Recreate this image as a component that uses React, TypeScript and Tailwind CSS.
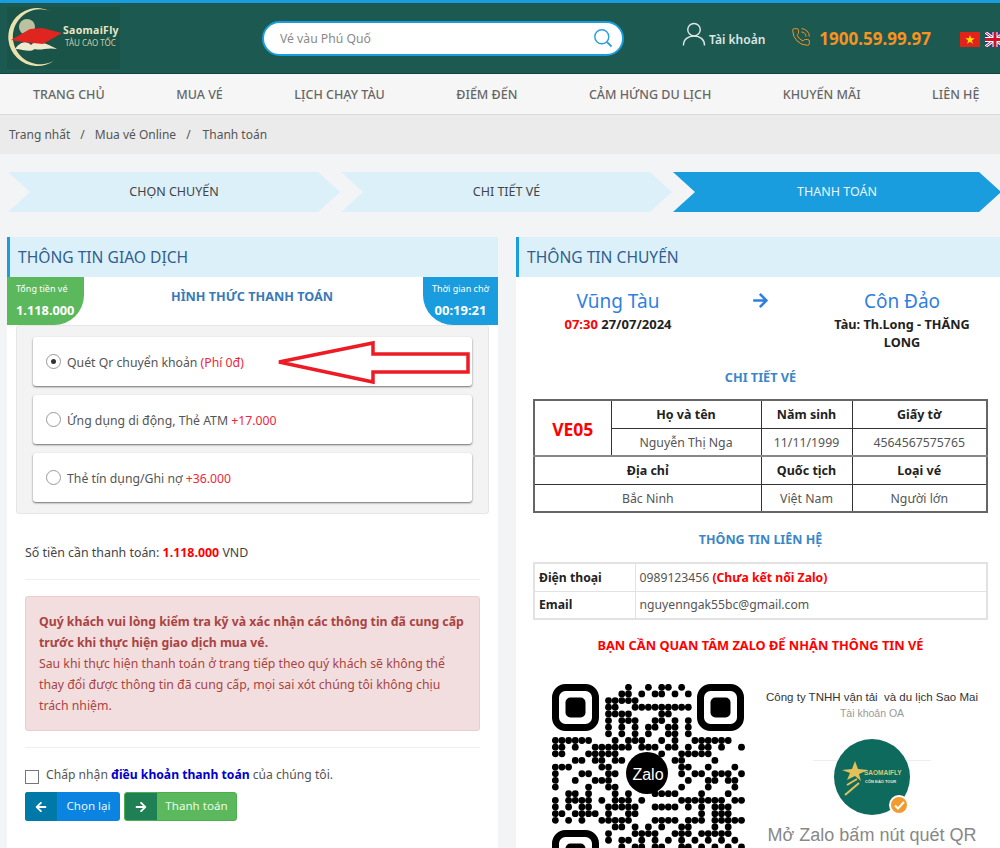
import React from "react";
import { FaArrowLeft, FaArrowRight } from "react-icons/fa";
import { PhoneCall } from "lucide-react";

const NAV = ["TRANG CHỦ", "MUA VÉ", "LỊCH CHẠY TÀU", "ĐIỂM ĐẾN", "CẢM HỨNG DU LỊCH", "KHUYẾN MÃI", "LIÊN HỆ"];

const QR_ROWS: number[][] = [
  [11, 14, 16, 17, 19],
  [10, 11, 13, 15, 16, 18, 20],
  [8, 9, 10, 11, 12],
  [8, 9, 12, 13, 14, 15, 16, 17, 18, 19, 20],
  [8, 9, 10, 11, 16, 17],
  [8, 10, 11, 12, 15, 16, 18, 20],
  [8, 10, 12, 14, 15, 17, 18, 20],
  [8, 10, 12, 14, 17, 18, 20],
  [0, 1, 2, 3, 4, 5, 9, 11, 12, 13, 16, 18, 21, 22, 23, 24, 25, 26],
  [0, 1, 3, 6, 7, 8, 9, 10, 11, 13, 14, 15, 17, 18, 20, 22, 23, 25, 28],
  [0, 1, 5, 6, 7, 8, 9, 16, 19, 20, 21, 22, 23],
  [3, 4, 6, 7, 9, 10, 18, 19, 24],
  [0, 1, 2, 7, 8, 19, 20, 23, 27],
  [0, 4, 5, 8, 9, 19, 21, 22, 24, 25, 26, 28],
  [0, 3, 6, 7, 8, 20, 23, 24, 26, 27],
  [0, 5, 8, 9, 19, 23, 27],
  [2, 3, 5, 9, 11, 15, 16, 17, 18, 22, 26],
  [0, 2, 3, 4, 5, 7, 9, 10, 11, 13, 19, 20, 21, 22, 23, 24, 25, 27, 28],
  [0, 2, 4, 5, 8, 9, 10, 11, 12, 15, 16, 17, 18, 20, 22, 24, 25, 26],
  [0, 1, 3, 4, 5, 6, 8, 11, 12, 22, 24, 25, 26],
  [0, 2, 4, 7, 8, 9, 10, 11, 15, 16, 17, 18, 20, 21, 22, 24, 25, 26, 27, 28],
  [9, 10, 12, 14, 16, 19, 20, 24, 26],
  [8, 12, 13, 14, 15, 18, 19, 20, 22, 23, 24, 25, 26],
  [8, 10, 11, 13, 15, 17, 19, 21, 23, 25, 27],
  [10, 12, 13, 15, 16, 19, 20, 22, 24, 26, 28],
];

function Finder({ x, y }: { x: number; y: number }) {
  return (
    <g>
      <rect x={x + 3.5} y={y + 3.5} width={40} height={40} rx={10} fill="none" stroke="#000" strokeWidth={7} />
      <rect x={x + 13.5} y={y + 13.5} width={20} height={20} rx={5} fill="#000" />
    </g>
  );
}

function QrCode() {
  const p = 6.65;
  return (
    <div className="relative h-[170px] w-[196px] shrink-0 overflow-hidden">
      <svg width="196" height="170" viewBox="0 0 196 170" className="absolute left-0 top-0">
        <Finder x={0} y={0} />
        <Finder x={145} y={0} />
        <Finder x={0} y={146} />
        {QR_ROWS.map((cols, r) =>
          cols.map((c) => <circle key={r + "-" + c} cx={c * p + 3.3} cy={r * p + 3.3} r={3.4} fill="#000" />)
        )}
        <circle cx={95} cy={89} r={21} fill="#000" />
      </svg>
      <span className="absolute left-[76px] top-[79px] w-[40px] text-center text-[16px] leading-[24px] text-white [font-family:'Liberation_Sans',sans-serif]">Zalo</span>
    </div>
  );
}

function Logo() {
  return (
    <div className="relative h-[62px] w-[113px] shrink-0 bg-[#1a5348]">
      <svg width="113" height="62" viewBox="0 0 113 62" className="absolute left-0 top-0">
        <path d="M43 4 A29 29 0 1 0 48 53 A27.5 27.5 0 1 1 43 4 Z" fill="#e9e1ae" />
        <circle cx="20" cy="20" r="8" fill="#f1e7bf" opacity="0.75" />
        <path d="M8 42 C14 34 20 34 24 38 C30 32 38 36 50 42 C40 40 34 44 28 42 C22 46 16 42 8 42 Z" fill="#efe9cf" />
        <path d="M4 33 L23 22 L35 21 L55 26 L36 37 L16 35 Z" fill="#e02420" />
      </svg>
      <span className="absolute left-[56px] top-[17px] whitespace-nowrap text-[10.5px] font-bold leading-[13px] tracking-[0.3px] text-[#e8e6c4]">SaomaiFly</span>
      <span className="absolute left-[58px] top-[31px] whitespace-nowrap text-[8px] leading-[10px] text-[#cfcfa8]">TÀU CAO TỐC</span>
    </div>
  );
}

function VnFlag() {
  return (
    <svg width="20" height="15" viewBox="0 0 20 15" className="shrink-0">
      <rect width="20" height="15" fill="#e2231a" />
      <polygon points="10,3 11.2,6.3 14.6,6.3 11.9,8.4 12.9,11.8 10,9.8 7.1,11.8 8.1,8.4 5.4,6.3 8.8,6.3" fill="#ffde00" />
    </svg>
  );
}

function UkFlag() {
  return (
    <svg width="20" height="15" viewBox="0 0 20 15" className="shrink-0">
      <rect width="20" height="15" fill="#2b3f87" />
      <path d="M0 0 L20 15 M20 0 L0 15" stroke="#fff" strokeWidth="3" />
      <path d="M0 0 L20 15 M20 0 L0 15" stroke="#d0112b" strokeWidth="1" />
      <path d="M10 0 V15 M0 7.5 H20" stroke="#fff" strokeWidth="5" />
      <path d="M10 0 V15 M0 7.5 H20" stroke="#d0112b" strokeWidth="3" />
    </svg>
  );
}

function Header() {
  return (
    <header className="flex h-[74px] items-center border-t-[3px] border-b border-t-[#1a9ddf] border-b-[#12433c] bg-[#1c5951]">
      <div className="ml-[7px] shrink-0"><Logo /></div>
      <div className="ml-[142px] flex h-[35px] w-[362px] shrink-0 items-center justify-between rounded-full border-2 border-[#1a9ddf] bg-white pl-[16px] pr-[9px]">
        <span className="pt-[2px] text-[12.2px] text-[#8a8a8a]">Vé vàu Phú Quố</span>
        <svg width="20" height="20" viewBox="0 0 20 20" fill="none" stroke="#2a9fdf" strokeWidth="1.4">
          <circle cx="8.8" cy="8.8" r="7" />
          <path d="M14 14 L18.5 18.5" strokeWidth="1.8" />
        </svg>
      </div>
      <div className="mb-[8px] ml-[58px] flex h-[24px] shrink-0 items-start">
        <svg width="24" height="24" viewBox="0 0 24 25" fill="none" stroke="#dfe6e4" strokeWidth="1.5">
          <circle cx="12" cy="8" r="6.5" />
          <path d="M1 24.5 C1 18 6 14.5 12 14.5 C18 14.5 23 18 23 24.5" />
        </svg>
        <span className="ml-[3px] whitespace-nowrap pt-[8px] text-[12px] font-semibold leading-[20px] text-[#dfe6e4]">Tài khoản</span>
      </div>
      <div className="ml-[26px] flex shrink-0 items-center">
        <PhoneCall size={20} strokeWidth={1.2} color="#f7931e" className="mb-[3px]" />
        <span className="ml-[8px] mt-[2px] whitespace-nowrap text-[17px] font-bold text-[#f7931e]">1900.59.99.97</span>
      </div>
      <div className="ml-[29px] mt-[3px] flex shrink-0 items-center gap-[5px]">
        <VnFlag />
        <UkFlag />
      </div>
    </header>
  );
}

function Nav() {
  return (
    <nav className="flex h-[41px] items-center gap-[71.5px] border-b border-[#d9d9d9] bg-[#f6f6f6] pl-[33px] pt-[2px]">
      {NAV.map((n) => (
        <span key={n} className="whitespace-nowrap text-[12.5px] font-medium text-[#666]">{n}</span>
      ))}
    </nav>
  );
}

function Breadcrumb() {
  return (
    <div className="flex h-[39px] items-center gap-[10px] bg-[#ebebeb] pl-[9px] text-[12px] text-[#555]">
      <span>Trang nhất</span>
      <span>/</span>
      <span>Mua vé Online</span>
      <span>/</span>
      <span className="ml-[2px]">Thanh toán</span>
    </div>
  );
}

function Steps() {
  return (
    <div className="flex gap-[1px] pl-[8px] pt-[18px]">
      <div className="flex h-[40px] w-[332px] shrink-0 items-center justify-center bg-[#dcf0fa] text-[12.5px] text-[#444] [clip-path:polygon(0_0,calc(100%-22px)_0,100%_50%,calc(100%-22px)_100%,0_100%,22px_50%)]">CHỌN CHUYẾN</div>
      <div className="flex h-[40px] w-[331px] shrink-0 items-center justify-center bg-[#dcf0fa] text-[12.5px] text-[#444] [clip-path:polygon(0_0,calc(100%-22px)_0,100%_50%,calc(100%-22px)_100%,0_100%,22px_50%)]">CHI TIẾT VÉ</div>
      <div className="flex h-[40px] w-[328px] shrink-0 items-center justify-center bg-[#1a9ddf] text-[12.5px] text-[#eaf6fc] [clip-path:polygon(0_0,calc(100%-22px)_0,100%_50%,calc(100%-22px)_100%,0_100%,22px_50%)]">THANH TOÁN</div>
    </div>
  );
}

function PanelTitle({ children }: { children: React.ReactNode }) {
  return (
    <div className="flex h-[40px] items-center border-l-[3px] border-[#1a9ddf] bg-[#dcf0fa] pl-[8px] pt-[2px] text-[15.6px] text-[#2f5f8f]">{children}</div>
  );
}

function Radio({ checked }: { checked?: boolean }) {
  return (
    <span className="flex h-[15px] w-[15px] shrink-0 items-center justify-center rounded-full border border-[#999] bg-white">
      {checked && <span className="h-[5px] w-[5px] rounded-full bg-[#333]" />}
    </span>
  );
}

function PayOption({ checked, children, arrow }: { checked?: boolean; children: React.ReactNode; arrow?: boolean }) {
  return (
    <div className="relative flex h-[49px] items-center gap-[6px] rounded-[3px] bg-white pl-[13px] text-[12.25px] text-[#555] shadow-[0_1px_2px_rgba(0,0,0,0.55)]">
      <Radio checked={checked} />
      <span className="pt-[4px]">{children}</span>
      {arrow && (
        <svg width="200" height="46" viewBox="0 0 200 46" fill="none" className="absolute left-[243px] top-[2px]">
          <path d="M3 23 L97 4 L97 15 L192 15 L192 33 L97 33 L97 43 Z" stroke="#ed1c24" strokeWidth="3.5" strokeLinejoin="miter" />
        </svg>
      )}
    </div>
  );
}

function LeftPanel() {
  return (
    <section className="h-[620px] w-[491px] shrink-0 bg-white">
      <PanelTitle>THÔNG TIN GIAO DỊCH</PanelTitle>
      <div className="flex h-[48px] items-stretch">
        <div className="flex w-[77px] flex-col rounded-br-[30px] bg-[#5cb85c] pl-[9px] pt-[5px] text-white">
          <span className="text-[9px] leading-[14px]">Tổng tiền vé</span>
          <span className="mt-[5px] text-[12.8px] font-bold leading-[18px]">1.118.000</span>
        </div>
        <div className="flex-1 pr-[3px] pt-[9px] text-center text-[12.65px] font-bold leading-[20px] text-[#3a79b8]">HÌNH THỨC THANH TOÁN</div>
        <div className="flex w-[75px] flex-col items-center rounded-bl-[30px] bg-[#1a9ddf] pt-[5px] text-white">
          <span className="text-[9px] leading-[14px]">Thời gian chờ</span>
          <span className="mt-[5px] text-[13px] font-bold leading-[18px]">00:19:21</span>
        </div>
      </div>
      <div className="mx-[9px] flex h-[189px] flex-col gap-[9px] rounded-[3px] border border-[#e6e6e6] bg-[#f3f3f3] px-[16px] pt-[11px]">
        <PayOption checked arrow>Quét Qr chuyển khoản <span className="text-[#f0263c]">(Phí 0đ)</span></PayOption>
        <PayOption>Ứng dụng di động, Thẻ ATM <span className="text-[#f0263c]">+17.000</span></PayOption>
        <PayOption>Thẻ tín dụng/Ghi nợ <span className="text-[#f0263c]">+36.000</span></PayOption>
      </div>
      <div className="px-[18px]">
        <p className="mt-[30px] text-[12.4px] leading-[18px] text-[#444]">Số tiền cần thanh toán: <b className="text-[#ff0000]">1.118.000</b> VND</p>
        <div className="mt-[17px] h-px bg-[#eee]" />
        <div className="mt-[16px] h-[135px] rounded-[3px] border border-[#ebccd1] bg-[#f2dede] pl-[13px] pr-[12px] pt-[14px] text-[12.25px] leading-[21px] text-[#a94442]">
          <b>Quý khách vui lòng kiểm tra kỹ và xác nhận các thông tin đã cung cấp trước khi thực hiện giao dịch mua vé.</b>
          <br />
          Sau khi thực hiện thanh toán ở trang tiếp theo quý khách sẽ không thể thay đổi được thông tin đã cung cấp, mọi sai xót chúng tôi không chịu trách nhiệm.
        </div>
        <div className="mt-[16px] h-px bg-[#eee]" />
        <div className="mt-[18px] flex h-[22px] items-start gap-[7px] text-[12.15px] leading-[18px] text-[#555]">
          <span className="mt-[4px] h-[14px] w-[14px] shrink-0 border border-[#777] bg-white" />
          <span>Chấp nhận <b className="text-[#0000cc]">điều khoản thanh toán</b> của chúng tôi.</span>
        </div>
        <div className="mt-[4px] flex gap-[4px]">
          <button className="flex h-[29px] w-[95px] overflow-hidden rounded-[3px] bg-[#0a84e0] text-[11.6px] text-[#eaf6fc]">
            <span className="flex h-full w-[32px] items-center justify-center bg-[#0079a8]"><FaArrowLeft size={12} color="#fff" /></span>
            <span className="flex h-full flex-1 items-center justify-center pb-[2px]">Chọn lại</span>
          </button>
          <button className="flex h-[29px] w-[113px] overflow-hidden rounded-[3px] border border-[#4cae4c] bg-[#5cb85c] text-[11.6px] text-[#eafbe8]">
            <span className="flex h-full w-[32px] items-center justify-center bg-[#1e8054]"><FaArrowRight size={12} color="#fff" /></span>
            <span className="flex h-full flex-1 items-center justify-center pb-[2px]">Thanh toán</span>
          </button>
        </div>
      </div>
    </section>
  );
}

const th = "border border-[#333] pt-[3px] text-center text-[12.5px] font-bold text-[#222]";
const td = "border border-[#333] pt-[3px] text-center text-[12.3px] font-normal text-[#555]";

function TicketTable() {
  return (
    <table className="h-[113px] w-[455px] table-fixed border-collapse border-2 border-[#666]">
      <colgroup>
        <col className="w-[77px]" />
        <col className="w-[150px]" />
        <col className="w-[91px]" />
        <col />
      </colgroup>
      <tbody>
        <tr className="h-[28px]">
          <td rowSpan={2} className="border border-[#333] pt-[3px] text-center text-[17.5px] font-bold text-[#ff0000]">VE05</td>
          <th className={th}>Họ và tên</th>
          <th className={th}>Năm sinh</th>
          <th className={th}>Giấy tờ</th>
        </tr>
        <tr className="h-[28px]">
          <td className={td}>Nguyễn Thị Nga</td>
          <td className={td}>11/11/1999</td>
          <td className={td}>4564567575765</td>
        </tr>
        <tr className="h-[28px] border-t-2 border-[#888]">
          <th colSpan={2} className={th}>Địa chỉ</th>
          <th className={th}>Quốc tịch</th>
          <th className={th}>Loại vé</th>
        </tr>
        <tr className="h-[28px]">
          <td colSpan={2} className={td}>Bắc Ninh</td>
          <td className={td}>Việt Nam</td>
          <td className={td}>Người lớn</td>
        </tr>
      </tbody>
    </table>
  );
}

function ContactTable() {
  return (
    <table className="h-[56px] w-[455px] table-fixed border-collapse border-2 border-[#e2e2e2]">
      <colgroup>
        <col className="w-[101px]" />
        <col />
      </colgroup>
      <tbody>
        <tr className="h-[28px]">
          <th className="border border-[#e2e2e2] pl-[4px] pt-[1px] text-left text-[12.2px] font-bold text-[#222]">Điện thoại</th>
          <td className="border border-[#e2e2e2] pl-[4px] pt-[1px] text-[12.2px] text-[#555]">0989123456 <b className="text-[#ff0000]">(Chưa kết nối Zalo)</b></td>
        </tr>
        <tr className="h-[28px]">
          <th className="border border-[#e2e2e2] pl-[4px] pt-[1px] text-left text-[12.2px] font-bold text-[#222]">Email</th>
          <td className="border border-[#e2e2e2] pl-[4px] pt-[1px] text-[12.2px] text-[#555]">nguyenngak55bc@gmail.com</td>
        </tr>
      </tbody>
    </table>
  );
}

function OaLogo() {
  return (
    <div className="relative h-[78px] w-[118px]">
      <div className="absolute left-0 right-0 top-[21px] h-px bg-[#eee]" />
      <div className="absolute left-[21px] top-0 h-[76px] w-[76px] rounded-full bg-[#0f6a5e]" />
      <svg width="30" height="36" viewBox="0 0 30 36" className="absolute left-[28px] top-[22px]">
        <polygon points="14,0 17,8 27,9 18,13 20,20 14,15 6,19 9,12 1,9 11,8" fill="#e2c15a" />
        <path d="M16 18 L6 24 M18 22 L4 34" stroke="#e2c15a" strokeWidth="2" />
      </svg>
      <span className="absolute left-[51px] top-[29px] text-[6.5px] font-semibold leading-[9px] text-[#d8c878]">SAOMAIFLY</span>
      <span className="absolute left-[52px] top-[40px] text-[4px] font-bold leading-[6px] text-[#e8e8d8]">CÔN ĐẢO TOUR</span>
      <div className="absolute left-[76px] top-[56px] flex h-[20px] w-[20px] items-center justify-center rounded-full border-2 border-white bg-[#f29a2e]">
        <svg width="11" height="9" viewBox="0 0 11 9" fill="none" stroke="#fff" strokeWidth="2"><path d="M1 4.5 L4 7.5 L10 1" /></svg>
      </div>
    </div>
  );
}

function RightPanel() {
  return (
    <section className="h-[620px] w-[490px] shrink-0 bg-white">
      <PanelTitle>THÔNG TIN CHUYẾN</PanelTitle>
      <div className="ml-[31px] mt-[10px] grid w-[426px] grid-cols-3 text-center">
        <div>
          <div className="text-[19px] leading-[28px] text-[#2f7fe0]">Vũng Tàu</div>
          <div className="text-[13px] font-bold leading-[18px] text-[#222]"><span className="text-[#ff0000]">07:30</span> 27/07/2024</div>
        </div>
        <div className="flex justify-center pt-[5px]"><FaArrowRight size={17} color="#2f7fe0" /></div>
        <div>
          <div className="text-[19px] leading-[28px] text-[#2f7fe0]">Côn Đảo</div>
          <div className="text-[12.7px] font-bold leading-[18px] text-[#222]">Tàu: Th.Long - THĂNG LONG</div>
        </div>
      </div>
      <div className="ml-[17px] w-[455px]">
        <div className="mt-[17px] text-center text-[12.7px] font-bold leading-[18px] text-[#3a86c8]">CHI TIẾT VÉ</div>
        <div className="mt-[13px]"><TicketTable /></div>
        <div className="mt-[18px] text-center text-[12.5px] font-bold leading-[18px] text-[#3a86c8]">THÔNG TIN LIÊN HỆ</div>
        <div className="mt-[13px]"><ContactTable /></div>
        <div className="mt-[16px] text-center text-[12.8px] font-bold leading-[18px] text-[#ff0000]">BẠN CẦN QUAN TÂM ZALO ĐỂ NHẬN THÔNG TIN VÉ</div>
      </div>
      <div className="mt-[30px] flex pl-[36px]">
        <QrCode />
        <div className="ml-[18px] flex flex-col items-center pt-[5px] [font-family:'Liberation_Sans',sans-serif]">
          <div className="whitespace-pre text-[11.5px] leading-[16px] text-[#333]">Công ty TNHH vận tải  và du lịch Sao Mai</div>
          <div className="mt-[1px] text-[10.5px] leading-[15px] text-[#999]">Tài khoản OA</div>
          <div className="mt-[18px]"><OaLogo /></div>
          <div className="mt-[6px] whitespace-nowrap text-[18px] leading-[24px] text-[#888]">Mở Zalo bấm nút quét QR</div>
        </div>
      </div>
    </section>
  );
}

export default function App() {
  return (
    <div className="h-[848px] w-[1000px] overflow-hidden bg-[#f3f4f6] [font-family:'Noto_Sans',sans-serif]">
      <Header />
      <Nav />
      <Breadcrumb />
      <Steps />
      <main className="mt-[25px] flex gap-[18px] pl-[7px]">
        <LeftPanel />
        <RightPanel />
      </main>
    </div>
  );
}
